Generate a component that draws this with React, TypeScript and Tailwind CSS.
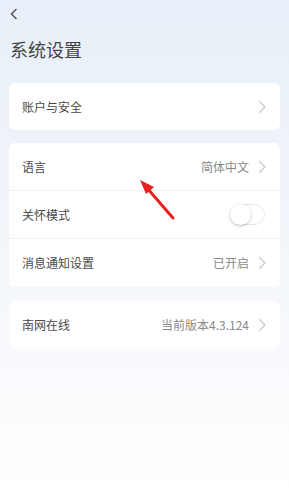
import React from "react";

const font = { fontFamily: '"Noto Sans CJK SC", "Noto Sans", sans-serif' };

function Chevron() {
  return (
    <svg width="8" height="14" viewBox="0 0 8 14" className="shrink-0">
      <path d="M1 1l6 6-6 6" fill="none" stroke="#c8c8c8" strokeWidth="1.2" />
    </svg>
  );
}

function Row({ label, value, last, h = "h-[48px]" }: { label: string; value?: string; last?: boolean; h?: string }) {
  return (
    <div className={`flex ${h} items-center justify-between pl-[13px] pr-[14px] ${last ? "" : "border-b border-[#f0f0f0]"}`}>
      <span className="text-[12px] text-[#4a4a4a]">{label}</span>
      <div className="flex items-center gap-[9px]">
        {value && <span className="text-[12px] text-[#8a8a8a]">{value}</span>}
        <Chevron />
      </div>
    </div>
  );
}

function Toggle() {
  return (
    <div className="relative h-[21px] w-[35px] rounded-full border border-[#e6e6e6] bg-white">
      <div className="absolute left-[-1px] top-[-1px] h-[21px] w-[21px] rounded-full bg-white shadow-[0_1px_3px_rgba(0,0,0,0.25)]" />
    </div>
  );
}

export default function App() {
  return (
    <div style={font} className="relative h-[500px] w-[289px] overflow-hidden bg-gradient-to-b from-[#e8eff8] via-[#f3f6fb] to-[#ffffff]">
      <div className="px-[10px] pt-[8px]">
        <svg width="8" height="12" viewBox="0 0 8 12">
          <path d="M6.5 1L1.5 6l5 5" fill="none" stroke="#555" strokeWidth="1.5" />
        </svg>
      </div>
      <h1 className="mt-[17px] px-[10px] text-[18px] leading-[24px] text-[#444]">系统设置</h1>

      <div className="mx-[9px] mt-[22px] flex flex-col gap-[13px]">
        <div className="rounded-[6px] bg-white">
          <Row label="账户与安全" last h="h-[47px]" />
        </div>

        <div className="rounded-[6px] bg-white">
          <Row label="语言" value="简体中文" />
          <div className="flex h-[48px] items-center justify-between border-b border-[#f0f0f0] pl-[13px] pr-[15px]">
            <span className="text-[12px] text-[#4a4a4a]">关怀模式</span>
            <Toggle />
          </div>
          <Row label="消息通知设置" value="已开启" last />
        </div>

        <div className="mt-[1px] rounded-[6px] bg-white">
          <Row label="南网在线" value="当前版本4.3.124" last h="h-[47px]" />
        </div>
      </div>

      <svg className="absolute left-0 top-0" width="289" height="500" viewBox="0 0 289 500">
        <line x1="173" y1="218" x2="147" y2="188" stroke="#e8201f" strokeWidth="3" strokeLinecap="round" />
        <polygon points="140,180 154,187 146,194" fill="#e8201f" />
      </svg>
    </div>
  );
}
